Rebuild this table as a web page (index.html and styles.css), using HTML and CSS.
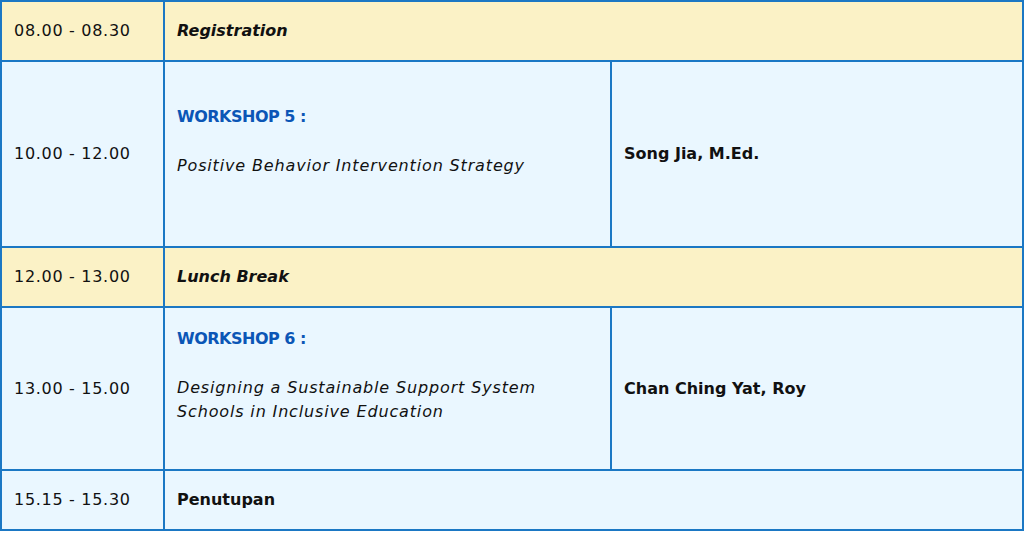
FILE: index.html
```html
<!DOCTYPE html>
<html lang="en">
<head>
<meta charset="utf-8">
<title>Schedule</title>
<link rel="stylesheet" href="styles.css">
</head>
<body>
<div class="schedule">
  <div class="cell time break">08.00 - 08.30</div>
  <div class="cell wide break"><em class="strong">Registration</em></div>

  <div class="cell time">10.00 - 12.00</div>
  <div class="cell session">
    <div class="block">
      <p class="ws">WORKSHOP 5 :</p>
      <p class="title">Positive Behavior Intervention Strategy</p>
    </div>
  </div>
  <div class="cell speaker">Song Jia, M.Ed.</div>

  <div class="cell time break">12.00 - 13.00</div>
  <div class="cell wide break"><em class="strong">Lunch Break</em></div>

  <div class="cell time">13.00 - 15.00</div>
  <div class="cell session">
    <div class="block">
      <p class="ws">WORKSHOP 6 :</p>
      <p class="title">Designing a Sustainable Support System<br>Schools in Inclusive Education</p>
    </div>
  </div>
  <div class="cell speaker">Chan Ching Yat, Roy</div>

  <div class="cell time">15.15 - 15.30</div>
  <div class="cell wide"><span class="strong">Penutupan</span></div>
</div>
</body>
</html>
```

FILE: styles.css
```css
html, body {
  margin: 0;
  padding: 0;
  background: #ffffff;
}

body {
  font-family: "DejaVu Sans", "Open Sans", sans-serif;
  font-size: 16px;
  color: #111111;
}

.schedule {
  width: 1024px;
  box-sizing: border-box;
  display: grid;
  grid-template-columns: 161px 445px 410px;
  grid-template-rows: 58px 184px 58px 161px 58px;
  gap: 2px;
  padding: 2px;
  background: #1b78c4;
}

.cell {
  background: #eaf7ff;
  padding: 0 12px;
  display: flex;
  align-items: center;
  line-height: 24px;
}

.cell.break {
  background: #fbf2c6;
}

.cell.wide {
  grid-column: span 2;
}

.time {
  letter-spacing: 0.7px;
}

.strong {
  font-weight: 700;
}

em.strong {
  font-style: italic;
}

.speaker {
  font-weight: 700;
}

.block p {
  margin: 0;
}

.block .ws {
  color: #0b56b6;
  font-weight: 700;
  letter-spacing: -0.5px;
  margin-bottom: 25px;
}

.block .title {
  font-style: italic;
  letter-spacing: 0.85px;
  margin-bottom: 26px;
}
```
